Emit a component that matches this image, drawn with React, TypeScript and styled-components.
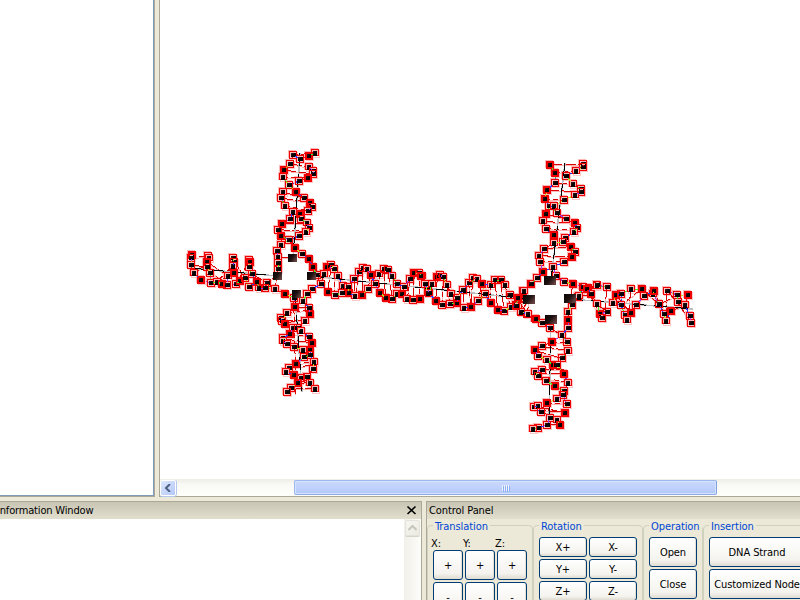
import React from 'react';
import styled, { createGlobalStyle } from 'styled-components';

const GlobalStyle = createGlobalStyle`
  * { box-sizing: border-box; }
  html, body, #root { margin: 0; width: 800px; height: 600px; overflow: hidden; }
  body {
    background: #ece9d8;
    color: #000;
    font: 11px/13px "DejaVu Sans Condensed", "Noto Sans", sans-serif;
    font-stretch: condensed;
  }
`;

const Window = styled.div`
  width: 800px;
  height: 600px;
  overflow: hidden;
  display: flex;
  flex-direction: column;
  gap: 4px;
`;
const Workspace = styled.div`
  display: flex;
  gap: 4px;
  height: 497px;
`;
const SidePane = styled.div`
  width: 155px;
  background: #fff;
  border: solid #aca899;
  border-width: 0 1px 1px 0;
  box-shadow: inset -1px -1px #7f9db9;
`;
const Viewport = styled.div`
  width: 641px;
  flex: none;
  display: flex;
  flex-direction: column;
  background: #fff;
  border: solid #aca899;
  border-width: 0 0 1px 1px;
`;
const Scene = styled.svg`
  display: block;
  width: 640px;
  height: 479px;
`;
const HScroll = styled.div`
  height: 17px;
  display: flex;
  align-items: center;
  background: linear-gradient(#eeede5, #f8f8f5 30%, #fefefb);
`;
const ScrollButton = styled.div<{ $disabled?: boolean }>`
  width: ${p => (p.$disabled ? 15 : 16)}px;
  height: 16px;
  display: flex;
  align-items: center;
  justify-content: center;
  border: 1px solid ${p => (p.$disabled ? '#e4e3db' : '#fff')};
  border-radius: 2px;
  background: ${p => (p.$disabled ? 'linear-gradient(135deg, #f7f6f2, #eceadf)' : 'linear-gradient(135deg, #dce6fe, #b3c8f8)')};
  box-shadow: ${p => (p.$disabled ? '0 1px #d5d4c9' : '1px 0 #b5c8ed, 0 1px #b5c8ed')};
`;
const Thumb = styled.div`
  width: 423px;
  height: 15px;
  margin-left: 118px;
  display: flex;
  align-items: center;
  justify-content: center;
  gap: 1px;
  padding-right: 1px;
  border: 1px solid #9db7ef;
  border-right-color: #7fa1e0;
  border-bottom-color: #8eabe5;
  border-radius: 2px;
  box-shadow: inset 0 0 0 1px #d5e2fe;
  background: linear-gradient(#cad9fe, #bfd0fc 55%, #b2c9f8);
`;
const Grip = styled.i`
  width: 1px;
  height: 6px;
  background: #eef4fe;
  box-shadow: 1px 1px #8cb0f8;
`;

const Docks = styled.div`
  display: flex;
  gap: 4px;
  height: 99px;
`;
const Dock = styled.section<{ $width: number; $side: 'left' | 'right' }>`
  width: ${p => p.$width}px;
  flex: none;
  display: flex;
  flex-direction: column;
  border: solid #aca899;
  border-width: ${p => (p.$side === 'left' ? '1px 1px 0 0' : '1px 0 0 1px')};
`;
const TitleBar = styled.header<{ $inset: number }>`
  height: 17px;
  flex: none;
  padding: 2px 4px 0 ${p => p.$inset}px;
  display: flex;
  justify-content: space-between;
  background: linear-gradient(#c8c5b4, #dedbca 85%, #e1dfcc);
`;
const Title = styled.span<{ $shift?: boolean }>`
  margin-left: ${p => (p.$shift ? -3 : 0)}px;
  letter-spacing: ${p => (p.$shift ? -0.17 : -0.08)}px;
  white-space: nowrap;
`;
const LogBody = styled.div`
  flex: 1;
  display: flex;
  justify-content: flex-end;
  background: #fff;
`;
const VScroll = styled.div`
  width: 17px;
  padding: 1px;
  background: linear-gradient(90deg, #f1f0e9, #fdfdfa);
`;

const Groups = styled.div`
  display: flex;
  width: 400px;
  height: 82px;
`;
const Group = styled.fieldset<{ $width: number }>`
  width: ${p => p.$width}px;
  flex: none;
  margin: 0;
  padding: 0 5px;
  border: 1px solid #d0d0bf;
  border-radius: 4px 4px 0 0;
  min-width: 0;
  height: 110px;
`;
const Legend = styled.legend`
  padding: 1px 2px 0;
  height: 13px;
  color: #0046d5;
  letter-spacing: -0.08px;
  white-space: nowrap;
`;
const Axes = styled.div`
  display: flex;
  gap: 2px;
  padding-top: 5px;
  height: 18px;
`;
const Axis = styled.span`
  width: 30px;
  margin-left: -2px;
  margin-right: 2px;
`;
const Keys = styled.div<{ $cols: string }>`
  display: grid;
  grid-template-columns: ${p => p.$cols};
  gap: 2px;
  padding-top: 5px;
`;
const AxisKeys = styled(Keys)`
  padding-top: 0;
`;
const Key = styled.button<{ $height: number }>`
  height: ${p => p.$height}px;
  padding: 0;
  border: 1px solid #003c74;
  border-radius: 3px;
  background: linear-gradient(#fff, #f4f3ee 80%, #dfdbd0);
  box-shadow: inset -1px -1px #e3dfd5;
  color: #000;
  font: inherit;
  letter-spacing: -0.1px;
  white-space: nowrap;
`;

type P = [number, number];
type Region = { x: number; y: number; nodes: string; rungs: string };

/* Nodes are stored in third-of-a-pixel units relative to the region origin. */
const regions: Region[] = [
  {
    x: 180, y: 140,
    nodes: '338,44 405,40 387,47 359,58 330,71 387,82 312,90 400,93 400,102 309,112 383,113 356,124 326,136 308,155 347,157 371,174 304,174 316,197 389,188 396,200 383,212 338,217 359,223 330,236 363,236 382,250 306,252 388,264 295,269 378,276 302,288 357,288 327,300 303,315 345,325 292,333 367,342 295,351 386,358 295,369 293,387 400,383 37,345 32,354 32,375 43,400 64,419 94,430 83,348 86,355 80,367 80,381 89,400 111,425 125,432 140,435 168,433 145,408 162,399 158,355 161,366 158,378 180,424 195,415 215,401 208,360 210,367 208,381 206,440 236,443 231,426 262,430 256,444 285,448 315,461 397,447',
    rungs: '338,44,405,40 330,71,387,82 312,90,400,102 309,112,383,113 308,155,371,174 304,174,389,188 316,197,383,212 306,252,382,250 295,269,388,275 302,288,357,288 295,351,338,354 293,387,285,448 32,354,80,348 32,375,80,381 43,400,80,373 64,419,89,400 94,430,86,355 80,365,145,408 80,367,125,432 158,378,111,425 162,399,111,425 158,355,145,408 158,355,195,415 208,360,168,433 215,401,180,424 215,401,262,430 215,401,231,426 236,443,291,408 206,440,231,426'
  },
  {
    x: 180, y: 240,
    nodes: '341,175 369,183 345,202 382,161 386,203 321,218 389,222 304,233 305,243 375,243 316,252 338,263 354,265 364,274 329,281 387,290 310,294 308,304 397,309 320,312 342,320 369,331 391,331 391,346 372,352 402,366 348,371 326,384 398,388 319,395 341,405 363,413 381,411 390,428 355,430 334,443 321,455 406,448',
    rungs: '345,202,386,203 321,218,389,210 304,240,375,243 316,252,354,239 329,281,387,290 310,296,397,309 320,312,369,331 348,371,402,366 326,384,398,375 319,395,363,413 341,405,381,411 355,430,390,428 334,443,406,448 348,461,341,175'
  },
  {
    x: 310, y: 240,
    nodes: '8,82 20,105 34,133 42,102 50,82 64,75 72,86 84,108 53,156 75,165 96,159 98,137 117,159 115,141 132,117 136,169 156,165 147,96 158,83 171,87 182,105 174,147 195,131 207,101 210,158 221,88 234,90 247,107 227,174 247,176 261,133 262,163 276,161 282,141 300,117 292,178 313,99 326,99 309,180 336,108 330,177 345,131 354,146 354,160',
    rungs: '34,133,42,102 53,156,64,75 75,165,72,86 98,137,84,108 132,117,136,169 147,96,136,169 158,83,156,165 182,105,174,147 207,101,210,158 221,88,227,174 234,90,247,176 247,107,262,163 300,117,292,178 313,99,309,180 326,99,330,177'
  },
  {
    x: 420, y: 250,
    nodes: '4,78 16,101 28,130 37,102 52,82 61,75 70,82 82,105 47,154 67,166 90,162 94,133 111,159 111,144 130,120 132,173 153,170 146,98 158,84 171,86 185,103 174,154 196,131 212,105 213,160 225,90 242,90 255,106 233,180 252,183 270,135 272,171 288,166 293,148 310,123 304,186 332,103 322,191 350,85 346,208',
    rungs: '28,130,37,102 47,154,52,82 67,166,70,82 82,105,90,162 130,120,132,173 146,98,153,170 158,84,153,170 185,103,174,154 212,105,213,160 225,90,233,180 242,90,252,183 255,106,272,171 293,148,322,191 310,123,304,186 327,147,322,191 293,148,327,147'
  },
  {
    x: 515, y: 150,
    nodes: '105,45 205,42 203,50 184,62 120,69 152,77 119,98 175,103 96,121 197,118 197,125 180,135 90,146 147,151 103,169 116,169 92,192 125,189 152,207 83,214 179,220 186,233 93,236 177,247 116,256 150,263 143,277 117,278 167,290 88,296 179,305 72,317 171,321 75,336 147,335 113,350 83,367 66,385 47,403 27,423 9,445 122,379 148,395 174,401 204,410 190,440 219,415 245,407 227,433',
    rungs: '105,45,203,42 120,69,184,62 119,98,175,103 96,121,197,125 90,146,147,151 92,192,152,207 83,214,179,220 93,236,177,240 88,296,167,290 72,317,171,321 75,336,147,335 174,401,165,447 204,410,227,433 190,440,245,407 27,423,43,447'
  },
  {
    x: 515, y: 285,
    nodes: '3,62 17,82 38,87 62,102 80,114 106,129 158,82 158,106 158,130 172,61 140,151 111,172 156,172 81,184 158,197 59,196 70,213 141,220 95,225 114,240 125,241 82,254 61,262 147,266 69,274 92,288 158,293 121,304 147,319 144,329 125,341 95,354 156,357 57,366 68,364 149,384 79,380 106,399 126,405 135,419 97,420 69,428 54,432',
    rungs: '106,129,140,151 111,172,156,172 81,184,158,197 59,196,141,220 70,213,95,225 82,254,147,255 61,265,147,266 69,274,158,293 92,288,121,304 125,341,147,319 95,354,156,357 68,364,149,384 57,375,135,380 79,380,126,405 97,420,135,419 43,42,17,82 165,41,158,82'
  },
  {
    x: 570, y: 270,
    nodes: '9,41 38,50 80,46 26,79 50,57 62,73 110,52 80,103 90,131 97,145 111,125 128,98 138,76 152,73 153,106 182,57 215,56 199,104 221,79 249,72 252,62 290,62 166,135 170,150 183,130 267,103 283,132 288,153 303,124 321,76 323,97 346,105 354,76 361,137 364,160',
    rungs: '26,79,62,73 38,50,80,103 50,57,90,131 110,52,105,125 80,103,111,125 128,98,153,106 138,76,183,130 182,57,175,140 153,106,215,56 199,104,221,79 215,56,267,103 252,62,283,132 290,62,290,150 321,76,323,97 354,76,346,105 303,124,346,105 267,103,321,76 323,97,364,160 290,62,323,97'
  }
];

const hubs: P[] = [[292, 258], [277, 276], [311, 276], [296, 294], [529, 299], [550, 280], [570, 298], [551, 319]];
const axisRods = [
  [300, 153, 293, 258], [190, 268, 277, 276], [295, 294, 302, 392],
  [311, 276, 529, 299], [565, 163, 551, 280], [551, 319, 549, 425], [570, 299, 693, 309]
];

const toPoints = (r: Region): P[] => r.nodes.split(' ').map(s => {
  const [x, y] = s.split(',').map(Number);
  return [Math.round(r.x + x / 3), Math.round(r.y + y / 3)];
});

const allNodes = regions.flatMap(toPoints);
const rungLines = regions.flatMap(r => r.rungs.split(' ').map(s => {
  const v = s.split(',').map(Number);
  return [r.x + v[0] / 3, r.y + v[1] / 3, r.x + v[2] / 3, r.y + v[3] / 3];
}));

const strand: number[][] = [];
allNodes.forEach((a, i) => {
  allNodes
    .map((b, j) => ({ b, j, d: Math.hypot(a[0] - b[0], a[1] - b[1]) }))
    .filter(o => o.j !== i && o.d > 2 && o.d < 12.5)
    .sort((m, n) => m.d - n.d)
    .slice(0, 2)
    .forEach(o => strand.push([a[0], a[1], o.b[0], o.b[1]]));
});
const strandColours = ['#3030ff', '#46ef22', '#f00000', '#9f35ed', '#c0df28'];

function Molecule() {
  return (
    <Scene viewBox="160 0 640 479" shapeRendering="crispEdges">
      <defs>
        <linearGradient id="atom" x2="1" y2="1">
          <stop stopColor="#3b1717" /><stop offset=".45" stopColor="#080303" /><stop offset="1" stopColor="#000" />
        </linearGradient>
        <linearGradient id="hub" x2="1" y2="0.6">
          <stop stopColor="#070505" /><stop offset=".55" stopColor="#1d1010" /><stop offset="1" stopColor="#654040" />
        </linearGradient>
        <g id="halo" fill="none">
          <rect x="-4.5" y="-4.5" width="7" height="7" stroke="#ffb8b8" />
          <rect x="-2.5" y="-2.5" width="7" height="7" stroke="#ffc8c8" />
        </g>
        <g id="node0">
          <rect x="-3.5" y="-3.5" width="7" height="7" fill="none" stroke="#ee0000" />
          <rect x="-2" y="-2" width="5" height="4" fill="url(#atom)" />
          <rect x="-1" y="-3" width="3" height="1" fill="#ffb0b0" />
        </g>
        <g id="node1">
          <rect x="-3.5" y="-3.5" width="7" height="7" fill="#f00000" stroke="#ee0000" />
          <rect x="-2" y="-2" width="4" height="4" fill="url(#atom)" />
        </g>
        <g id="node2">
          <rect x="-3.5" y="-3.5" width="7" height="6" fill="#ffb0b0" stroke="#ee0000" />
          <rect x="-2" y="-2" width="4" height="5" fill="url(#atom)" />
        </g>
      </defs>
      {allNodes.map(([x, y], i) => <use key={i} href="#halo" x={x} y={y} />)}
      {rungLines.map(([a, b, c, d], i) => (
        <g key={i}>
          <path d={`M${a} ${b + 1}L${c} ${d + 1}`} stroke="#ffb5b5" />
          <path d={`M${a} ${b}L${c} ${d}`} stroke="#d90000" strokeDasharray={i % 3 ? '12 2' : '5 3'} />
        </g>
      ))}
      {axisRods.map(([a, b, c, d], i) => (
        <g key={i} fill="none">
          <path d={`M${a} ${b}L${c} ${d}`} stroke="#bdbdbd" strokeWidth="1.5" />
          <path d={`M${a} ${b}L${c} ${d}`} stroke="#000" strokeDasharray="13 8" />
        </g>
      ))}
      {strand.map(([a, b, c, d], i) => (
        <path key={i} d={`M${a} ${b}L${c} ${d}`} stroke={strandColours[(i >> 2) % 5]} strokeDasharray="4 1" />
      ))}
      {allNodes.map(([x, y], i) => <use key={i} href={`#node${(i * 5 + (i >> 2)) % 3}`} x={x} y={y} />)}
      {strand.filter((_, i) => i % 3 === 0).map(([a, b, c, d], i) => (
        <path
          key={i}
          d={`M${a + (c - a) * 0.36} ${b + (d - b) * 0.36}L${a + (c - a) * 0.64} ${b + (d - b) * 0.64}`}
          stroke={strandColours[i % 5]}
        />
      ))}
      {hubs.map(([x, y], i) => (
        <rect key={i} x={x - (i > 3 ? 6 : 4)} y={y - 4} width={i > 3 ? 12 : 9} height={i > 3 ? 9 : 8} fill="url(#hub)" />
      ))}
    </Scene>
  );
}

export default function App() {
  return (
    <>
      <GlobalStyle />
      <Window>
        <Workspace>
          <SidePane />
          <Viewport>
            <Molecule />
            <HScroll>
              <ScrollButton>
                <svg width="8" height="8" viewBox="0 0 8 8"><path d="M6 0L2 4l4 4" fill="none" stroke="#4d6185" strokeWidth="2" /></svg>
              </ScrollButton>
              <Thumb><Grip /><Grip /><Grip /><Grip /></Thumb>
            </HScroll>
          </Viewport>
        </Workspace>
        <Docks>
          <Dock $width={422} $side="left">
            <TitleBar $inset={0}>
              <Title $shift>Information Window</Title>
              <svg width="11" height="13" viewBox="0 0 11 13"><path d="M1.5 2.5l8 7.5M9.5 2.5l-8 7.5" stroke="#000" strokeWidth="1.6" /></svg>
            </TitleBar>
            <LogBody>
              <VScroll>
                <ScrollButton $disabled>
                  <svg width="9" height="8" viewBox="0 0 9 8"><path d="M.5 6l4-4 4 4" fill="none" stroke="#c7c6bc" strokeWidth="2" /></svg>
                </ScrollButton>
              </VScroll>
            </LogBody>
          </Dock>
          <Dock $width={374} $side="right">
            <TitleBar $inset={2}><Title>Control Panel</Title></TitleBar>
            <Groups>
              <Group $width={106}>
                <Legend>Translation</Legend>
                <Axes><Axis>X:</Axis><Axis>Y:</Axis><Axis>Z:</Axis></Axes>
                <AxisKeys $cols="30px 30px 30px">
                  {['+', '+', '+', '-', '-', '-'].map((t, i) => <Key key={i} $height={30}>{t}</Key>)}
                </AxisKeys>
              </Group>
              <Group $width={110}>
                <Legend>Rotation</Legend>
                <Keys $cols="48px 48px">
                  {['X+', 'X-', 'Y+', 'Y-', 'Z+', 'Z-'].map(t => <Key key={t} $height={20}>{t}</Key>)}
                </Keys>
              </Group>
              <Group $width={60}>
                <Legend>Operation</Legend>
                <Keys $cols="48px">
                  <Key $height={30}>Open</Key><Key $height={30}>Close</Key>
                </Keys>
              </Group>
              <Group $width={108}>
                <Legend>Insertion</Legend>
                <Keys $cols="96px">
                  <Key $height={30}>DNA Strand</Key><Key $height={30}>Customized Node</Key>
                </Keys>
              </Group>
            </Groups>
          </Dock>
        </Docks>
      </Window>
    </>
  );
}
